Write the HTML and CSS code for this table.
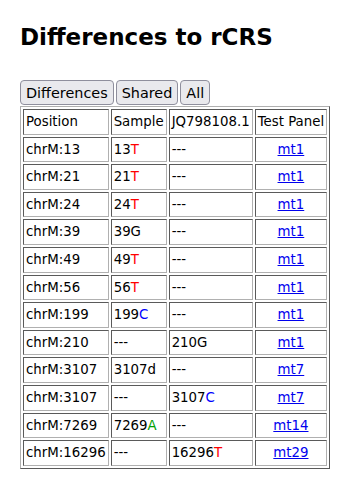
FILE: index.html
```html
<!DOCTYPE html>
<html>
<head>
<meta charset="utf-8">
<link rel="stylesheet" href="styles.css">
</head>
<body>
<h2 class="title">Differences to rCRS</h2>
<div class="tabs">
  <button class="tab">Differences</button>
  <button class="tab">Shared</button>
  <button class="tab">All</button>
</div>
<table class="diff">
  <tr><td>Position</td><td>Sample</td><td>JQ798108.1</td><td>Test Panel</td></tr>
  <tr><td>chrM:13</td><td>13<span class="t">T</span></td><td>---</td><td class="c"><a href="#">mt1</a></td></tr>
  <tr><td>chrM:21</td><td>21<span class="t">T</span></td><td>---</td><td class="c"><a href="#">mt1</a></td></tr>
  <tr><td>chrM:24</td><td>24<span class="t">T</span></td><td>---</td><td class="c"><a href="#">mt1</a></td></tr>
  <tr><td>chrM:39</td><td>39G</td><td>---</td><td class="c"><a href="#">mt1</a></td></tr>
  <tr><td>chrM:49</td><td>49<span class="t">T</span></td><td>---</td><td class="c"><a href="#">mt1</a></td></tr>
  <tr><td>chrM:56</td><td>56<span class="t">T</span></td><td>---</td><td class="c"><a href="#">mt1</a></td></tr>
  <tr><td>chrM:199</td><td>199<span class="cb">C</span></td><td>---</td><td class="c"><a href="#">mt1</a></td></tr>
  <tr><td>chrM:210</td><td>---</td><td>210G</td><td class="c"><a href="#">mt1</a></td></tr>
  <tr><td>chrM:3107</td><td>3107d</td><td>---</td><td class="c"><a href="#">mt7</a></td></tr>
  <tr><td>chrM:3107</td><td>---</td><td>3107<span class="cb">C</span></td><td class="c"><a href="#">mt7</a></td></tr>
  <tr><td>chrM:7269</td><td>7269<span class="a">A</span></td><td>---</td><td class="c"><a href="#">mt14</a></td></tr>
  <tr><td>chrM:16296</td><td>---</td><td>16296<span class="t">T</span></td><td class="c"><a href="#">mt29</a></td></tr>
</table>
</body>
</html>
```

FILE: styles.css
```css
body {
  margin: 0;
  padding: 0 20px;
  font-family: "DejaVu Sans", Verdana, sans-serif;
  color: #000;
  background: #fff;
}
.title {
  font-size: 23px;
  font-weight: bold;
  margin: 24px 0 30px 0;
  line-height: 26px;
}
.tabs {
  display: flex;
  gap: 2px;
  margin-bottom: 1px;
}
.tab {
  font-family: "DejaVu Sans", Verdana, sans-serif;
  font-size: 14.4px;
  box-sizing: border-box;
  height: 25px;
  padding: 0 5px;
  border: 1px solid #8f8f9d;
  border-radius: 4px;
  background: #e9e9ed;
  color: #000;
  line-height: 22px;
}
.diff {
  font-size: 13.33px;
  border-collapse: separate;
  border-spacing: 2.67px;
  border: 1px solid;
  border-color: #b0b0b0 #5a5a5a #5a5a5a #b0b0b0;
}
.diff td {
  border: 1px solid;
  border-color: #5a5a5a #b0b0b0 #b0b0b0 #5a5a5a;
  padding: 3px 2px;
  line-height: 17.6px;
  white-space: nowrap;
}
.diff td.c { text-align: center; }
.diff a { color: #0000ee; text-decoration: underline; }
.t { color: #ff0000; }
.cb { color: #0000ff; }
.a { color: #00a000; }
```
